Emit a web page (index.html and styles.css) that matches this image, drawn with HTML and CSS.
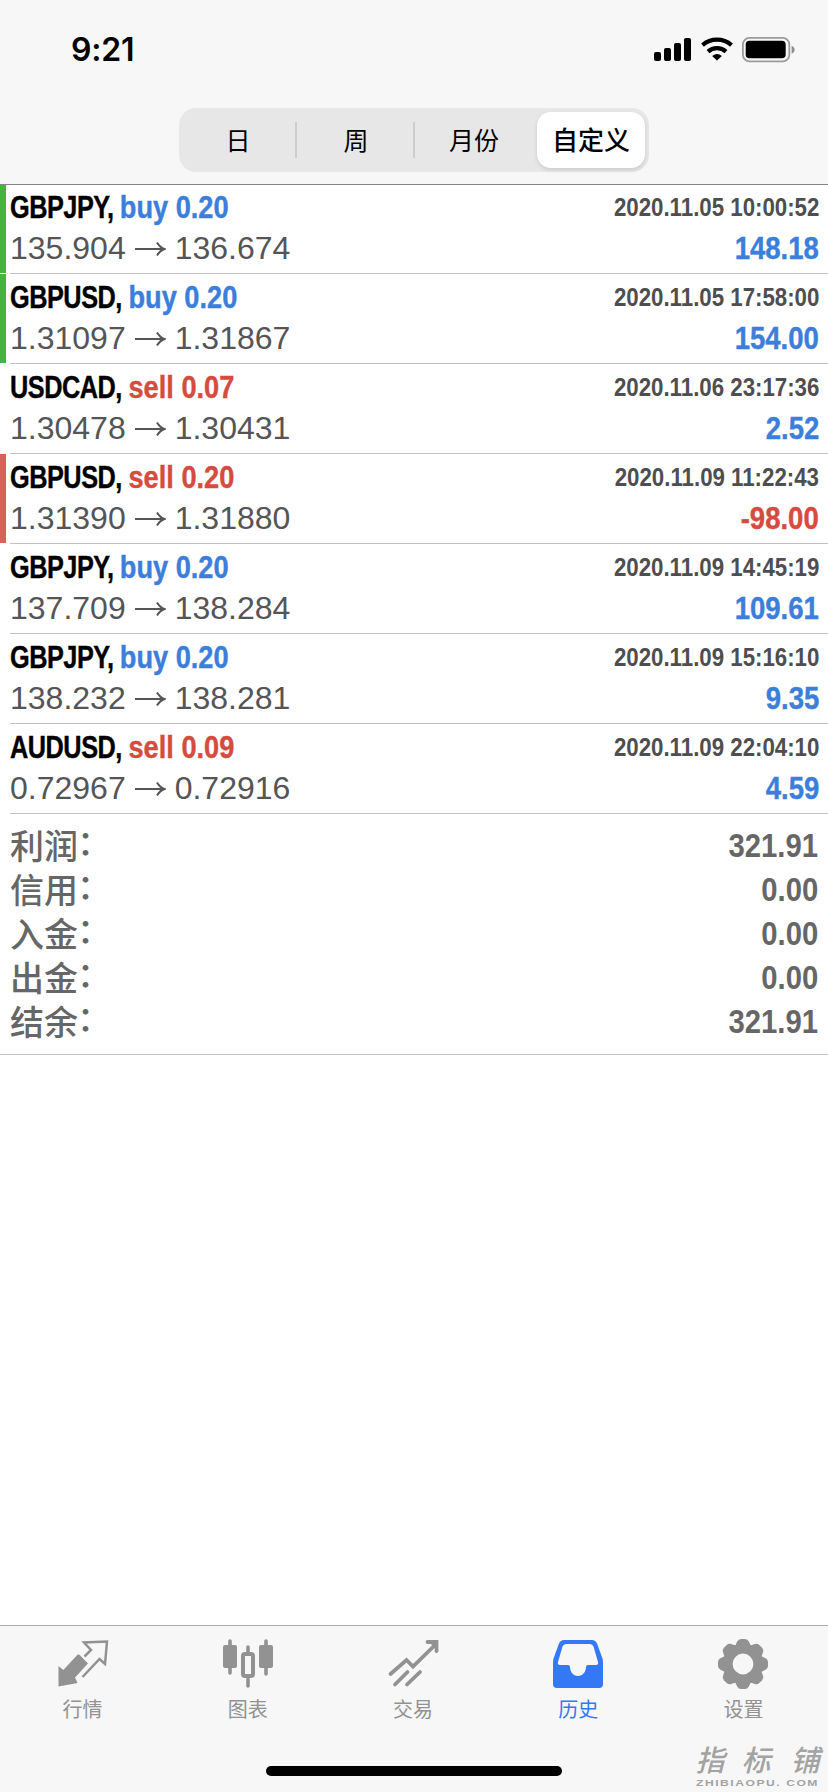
FILE: index.html
```html
<!DOCTYPE html>
<html lang="zh-CN">
<head>
<meta charset="utf-8">
<title>历史</title>
<link rel="stylesheet" href="styles.css">
</head>
<body>
<div class="app">
  <header class="header">
    <div class="status">
      <span class="clock">9:21</span>
      <svg class="status-icons" width="144" height="26" viewBox="0 0 144 26">
        <rect x="1" y="15" width="7" height="9" rx="2"/>
        <rect x="11" y="11" width="7" height="13" rx="2"/>
        <rect x="21" y="6" width="7" height="18" rx="2"/>
        <rect x="31" y="1" width="7" height="23" rx="2"/>
        <g fill="none" stroke="#000" stroke-width="4.2">
          <path d="M49.500 8.100a22 22 0 0 1 29 0"/>
          <path d="M55 14.600a13.500 13.500 0 0 1 18 0"/>
        </g>
        <path d="M64 23.500l-4.800-4.600a7 7 0 0 1 9.600 0z"/>
        <rect x="89.900" y="0.900" width="46.400" height="23.400" rx="6.500" fill="none" stroke="#9b9b9b" stroke-width="1.800"/>
        <rect x="92.700" y="3.700" width="40" height="17.500" rx="3.800"/>
        <path d="M138.600 8.800c4 1.500 4 6.500 0 8z" fill="#8e8e8e"/>
      </svg>
    </div>
    <nav class="segments">
      <span class="segment">日</span>
      <span class="segment">周</span>
      <span class="segment">月份</span>
      <span class="segment selected">自定义</span>
    </nav>
  </header>

  <main class="content">
    <section class="deals">
      <article class="deal win">
        <div class="line"><span class="title">GBPJPY, <b class="order buy">buy 0.20</b></span><span class="time">2020.11.05 10:00:52</span></div>
        <div class="line"><span class="prices">135.904<svg class="arrow" viewBox="0 0 32 16"><path d="M1 8h29M23 1.500Q26 6.500 30.500 8Q26 9.500 23 14.500"/></svg>136.674</span><span class="profit buy">148.18</span></div>
      </article>
      <article class="deal win">
        <div class="line"><span class="title">GBPUSD, <b class="order buy">buy 0.20</b></span><span class="time">2020.11.05 17:58:00</span></div>
        <div class="line"><span class="prices">1.31097<svg class="arrow" viewBox="0 0 32 16"><path d="M1 8h29M23 1.500Q26 6.500 30.500 8Q26 9.500 23 14.500"/></svg>1.31867</span><span class="profit buy">154.00</span></div>
      </article>
      <article class="deal">
        <div class="line"><span class="title">USDCAD, <b class="order sell">sell 0.07</b></span><span class="time">2020.11.06 23:17:36</span></div>
        <div class="line"><span class="prices">1.30478<svg class="arrow" viewBox="0 0 32 16"><path d="M1 8h29M23 1.500Q26 6.500 30.500 8Q26 9.500 23 14.500"/></svg>1.30431</span><span class="profit buy">2.52</span></div>
      </article>
      <article class="deal loss">
        <div class="line"><span class="title">GBPUSD, <b class="order sell">sell 0.20</b></span><span class="time">2020.11.09 11:22:43</span></div>
        <div class="line"><span class="prices">1.31390<svg class="arrow" viewBox="0 0 32 16"><path d="M1 8h29M23 1.500Q26 6.500 30.500 8Q26 9.500 23 14.500"/></svg>1.31880</span><span class="profit sell">-98.00</span></div>
      </article>
      <article class="deal">
        <div class="line"><span class="title">GBPJPY, <b class="order buy">buy 0.20</b></span><span class="time">2020.11.09 14:45:19</span></div>
        <div class="line"><span class="prices">137.709<svg class="arrow" viewBox="0 0 32 16"><path d="M1 8h29M23 1.500Q26 6.500 30.500 8Q26 9.500 23 14.500"/></svg>138.284</span><span class="profit buy">109.61</span></div>
      </article>
      <article class="deal">
        <div class="line"><span class="title">GBPJPY, <b class="order buy">buy 0.20</b></span><span class="time">2020.11.09 15:16:10</span></div>
        <div class="line"><span class="prices">138.232<svg class="arrow" viewBox="0 0 32 16"><path d="M1 8h29M23 1.500Q26 6.500 30.500 8Q26 9.500 23 14.500"/></svg>138.281</span><span class="profit buy">9.35</span></div>
      </article>
      <article class="deal">
        <div class="line"><span class="title">AUDUSD, <b class="order sell">sell 0.09</b></span><span class="time">2020.11.09 22:04:10</span></div>
        <div class="line"><span class="prices">0.72967<svg class="arrow" viewBox="0 0 32 16"><path d="M1 8h29M23 1.500Q26 6.500 30.500 8Q26 9.500 23 14.500"/></svg>0.72916</span><span class="profit buy">4.59</span></div>
      </article>
    </section>

    <section class="summary">
      <div class="total"><span>利润<i class="colon">：</i></span><span class="amount">321.91</span></div>
      <div class="total"><span>信用<i class="colon">：</i></span><span class="amount">0.00</span></div>
      <div class="total"><span>入金<i class="colon">：</i></span><span class="amount">0.00</span></div>
      <div class="total"><span>出金<i class="colon">：</i></span><span class="amount">0.00</span></div>
      <div class="total"><span>结余<i class="colon">：</i></span><span class="amount">321.91</span></div>
    </section>
  </main>

  <footer class="footer">
    <nav class="tabs">
      <span class="tab">
        <svg class="tab-icon" viewBox="0 0 52 52">
          <path fill="currentColor" d="M20.500 16.800q1-.8 2 0l8.500 8.700-13 14L20.500 45 1.500 48.500V28l4.800 4z"/>
          <path fill="none" stroke="currentColor" stroke-width="2.500" d="M27.500 18.500l6.500-6.500-7-7.500L50 3.500 48 26 42.500 21 25.500 39"/>
        </svg>行情</span>
      <span class="tab">
        <svg class="tab-icon" viewBox="0 0 52 52" fill="none" stroke="currentColor" stroke-linecap="round">
          <path stroke-width="3.600" d="M8 3v32M44 3v33M26 9v6M26 41v7"/>
          <rect x="1" y="7" width="14" height="23" rx="2" fill="currentColor" stroke="none"/>
          <rect x="37" y="7" width="14" height="23" rx="2" fill="currentColor" stroke="none"/>
          <rect x="21" y="16" width="10" height="22" rx="2" stroke-width="4"/>
        </svg>图表</span>
      <span class="tab">
        <svg class="tab-icon" viewBox="0 0 52 52" fill="none" stroke="currentColor" stroke-width="3.800" stroke-linecap="round">
          <path d="M3.500 36L19.500 22l6.500 6.500L48 7"/>
          <path d="M8 46.500L20.500 34M20 46.500L33 34"/>
          <path d="M40.500 4h9v9"/>
          <path stroke="none" fill="currentColor" d="M42 4h7.500v8z"/>
        </svg>交易</span>
      <span class="tab active">
        <svg class="tab-icon" viewBox="0 0 52 52">
          <path fill="currentColor" d="M12 2h28q3.500 0 5 3.500l5.500 15Q51 22 51 25v21q0 4-4 4H5q-4 0-4-4V25q0-3 .5-4.500l5.500-15Q8.500 2 12 2z"/>
          <path fill="#f7f7f7" d="M14 6h24q2.500 0 3.500 2.500l4.500 15.500q.7 3-2 3H36q-2 0-2 2c-.5 12-15.500 12-16 0q0-2-2-2H8q-2.700 0-2-3L10.500 8.500Q11.500 6 14 6z"/>
        </svg>历史</span>
      <span class="tab">
        <svg class="tab-icon" viewBox="-26 -26 52 52" fill="currentColor">
          <path id="tooth" d="M-8.500-17L-5.800-22.500Q-4.500-25-2-25H2Q4.500-25 5.800-22.500L8.500-17z"/>
          <use href="#tooth" transform="rotate(45)"/><use href="#tooth" transform="rotate(90)"/><use href="#tooth" transform="rotate(135)"/><use href="#tooth" transform="rotate(180)"/><use href="#tooth" transform="rotate(225)"/><use href="#tooth" transform="rotate(270)"/><use href="#tooth" transform="rotate(315)"/>
          <circle r="15.200" fill="none" stroke="currentColor" stroke-width="9.600"/>
        </svg>设置</span>
    </nav>
    <div class="home-indicator"></div>
    <svg class="watermark" width="136" height="58" viewBox="-4 -12 136 58">
      <g class="brand"><text x="15" y="27">指</text><text x="61" y="27">标</text><text x="110" y="27">铺</text></g>
      <g transform="translate(1 42) scale(1.35 1)"><text class="site" textLength="90">ZHIBIAOPU. COM</text></g>
    </svg>
  </footer>
</div>
</body>
</html>
```
FILE: styles.css
```css
* { box-sizing: border-box; }
body { margin: 0; background: #fff; }
.app {
  width: 828px;
  height: 1792px;
  display: flex;
  flex-direction: column;
  overflow: hidden;
  background: #fff;
  font-family: "Liberation Sans", "Noto Sans CJK SC", sans-serif;
}

/* Header */
.header {
  flex: none;
  height: 185px;
  display: flex;
  flex-direction: column;
  align-items: center;
  background: #f7f7f7;
  border-bottom: 1px solid #858585;
  position: relative;
  z-index: 1;
}
.status {
  width: 100%;
  height: 108px;
  display: flex;
  justify-content: space-between;
  padding: 30px 31px 0 71px;
}
.clock {
  font: 600 32px/40px Inter, sans-serif;
  letter-spacing: -0.2px;
}
.status-icons { margin-top: 7px; }
.segments {
  width: 470px;
  height: 64px;
  display: grid;
  grid-template-columns: 118px 118px 118px 108px;
  padding: 4px;
  padding-left: 0;
  border-radius: 17px;
  background: #e7e7e8;
}
.segment {
  font: 400 25px/54px "Noto Sans CJK SC", sans-serif;
  text-align: center;
  background: linear-gradient(#cdcdd0, #cdcdd0) right 0 center / 2px 36px no-repeat;
}
.segment:nth-child(3) { background: none; }
.segment.selected {
  margin-left: 4px;
  margin-right: -4px;
  font-weight: 500;
  font-size: 26px;
  background: #fff;
  border-radius: 14px;
  box-shadow: 0 2px 4px rgba(0, 0, 0, .12);
}

/* Deals */
.content { flex: 1; }
.deals { margin-top: -1px; }
.deal {
  height: 90px;
  padding: 3px 10px 0 4px;
  border-left: 6px solid transparent;
  background: linear-gradient(#c3c3c5, #c3c3c5) right bottom / calc(100% - 4px) 1px no-repeat;
}
.deal.win, .deal.loss { border-left: 0; padding-left: 10px; }
.deal.win {
  background:
    linear-gradient(#45b244, #45b244) 0 0 / 6px 89px no-repeat,
    linear-gradient(#c3c3c5, #c3c3c5) 10px bottom / 100% 1px no-repeat;
}
.deal.loss {
  background:
    linear-gradient(#da6156, #da6156) 0 0 / 6px 89px no-repeat,
    linear-gradient(#c3c3c5, #c3c3c5) 10px bottom / 100% 1px no-repeat;
}
.line {
  display: flex;
  justify-content: space-between;
  line-height: 41px;
  white-space: nowrap;
}
.title, .time, .profit, .amount { font-weight: 700; }
.title {
  font-size: 32px;
  letter-spacing: -.6px;
  transform: scaleX(.79);
  transform-origin: left;
  -webkit-text-stroke: .4px currentColor;
}
.order {
  display: inline-block;
  letter-spacing: 0;
  transform: scaleX(1.075);
  transform-origin: left;
}
.time {
  font-size: 25.5px;
  color: #4e4e50;
  transform: scaleX(.873);
  transform-origin: right;
  margin-right: -1px;
}
.profit {
  font-size: 32px;
  transform: scaleX(.86);
  transform-origin: right;
  margin-right: -1px;
  -webkit-text-stroke: .4px currentColor;
}
.prices {
  display: flex;
  align-items: center;
  font-size: 32px;
  color: #555557;
}
.arrow {
  width: 32px;
  height: 16px;
  margin: 0 9px 0 8px;
  fill: none;
  stroke: currentColor;
  stroke-width: 2;
}
.buy { color: #3b7edb; }
.sell { color: #d54b3d; }

/* Totals */
.summary {
  height: 241px;
  padding: 9px 10px 0;
  border-bottom: 1px solid #c3c3c5;
}
.total {
  display: flex;
  justify-content: space-between;
  font: 500 34px/44px "Noto Sans CJK SC", sans-serif;
  color: #666;
}
.colon {
  display: inline-block;
  font-style: normal;
  transform: translate(-1px, -4px);
}
.amount {
  font: 700 34px/44px "Liberation Sans", sans-serif;
  transform: scaleX(.86);
  transform-origin: right;
}

/* Footer */
.footer {
  flex: none;
  height: 167px;
  background: #f7f7f7;
  border-top: 1px solid #a9a9ab;
  position: relative;
}
.tabs {
  height: 140px;
  display: grid;
  grid-template-columns: repeat(5, 1fr);
  padding-right: 2px;
}
.tab {
  display: flex;
  flex-direction: column;
  align-items: center;
  padding-top: 12px;
  font: 400 20px/30px "Noto Sans CJK SC", sans-serif;
  color: #929292;
}
.tab-icon { width: 52px; height: 52px; margin-bottom: 4px; flex: none; }
.tab.active { color: #3478f6; }
.home-indicator {
  width: 296px;
  height: 10px;
  margin: 0 auto;
  border-radius: 5px;
  background: #000;
}
.watermark {
  position: absolute;
  right: 1px;
  bottom: 2px;
  fill: #a3a3a3;
}
.brand { font: italic 500 29px "Noto Sans CJK SC", sans-serif; text-anchor: middle; }
.site { font: 700 9px "Liberation Sans", sans-serif; }
```
